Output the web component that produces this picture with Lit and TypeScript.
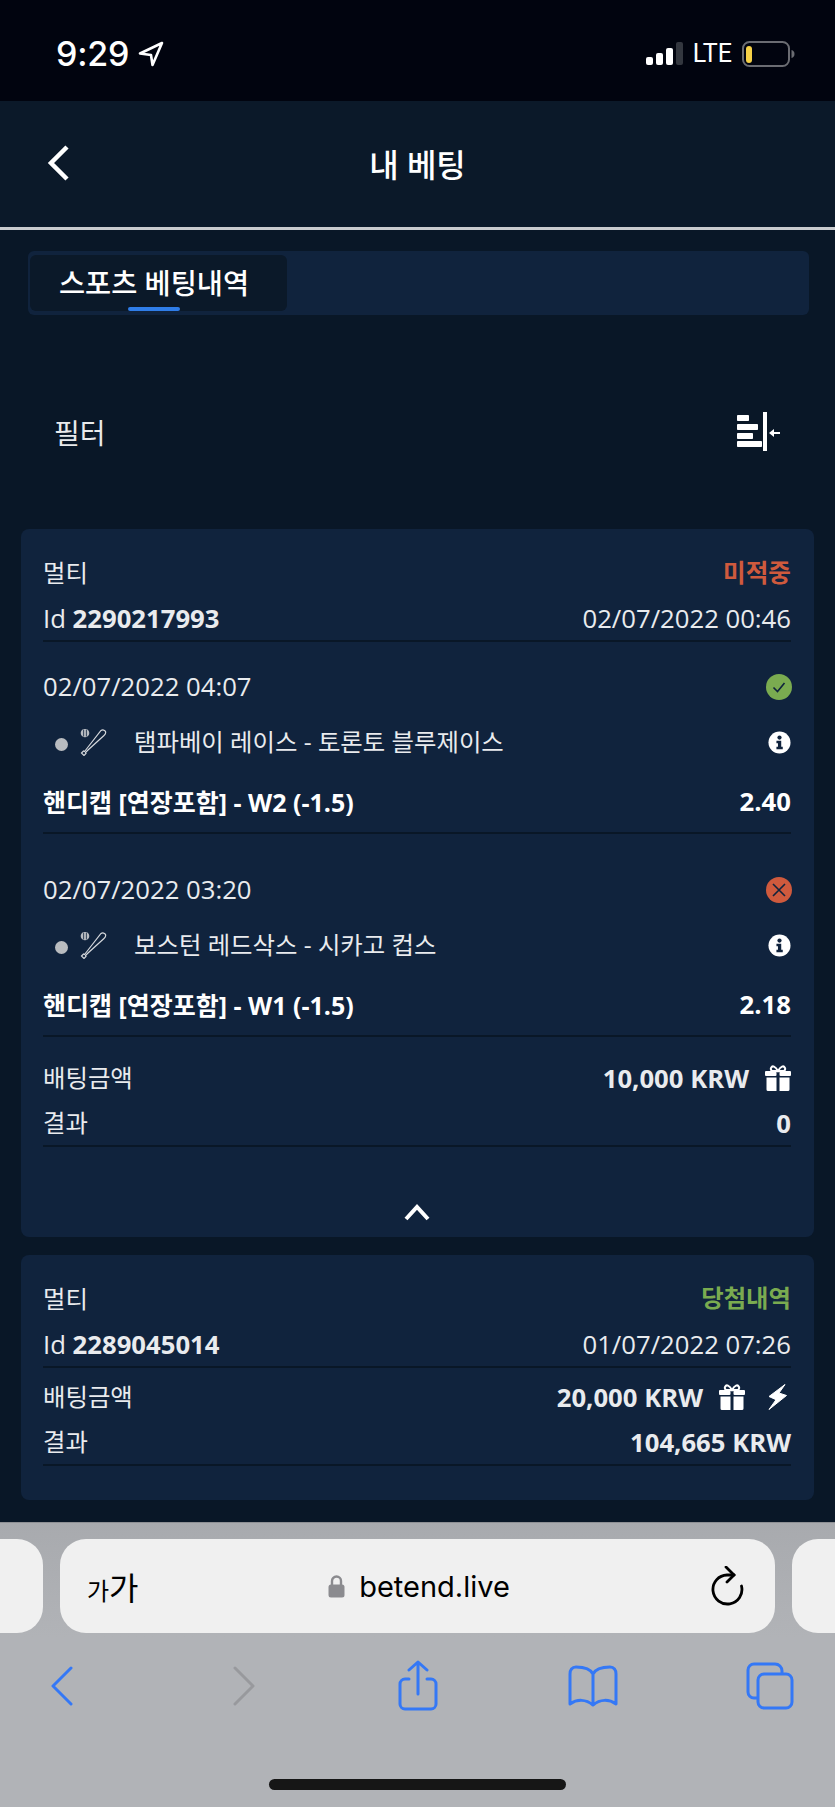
import { LitElement, html, css, svg } from 'lit';
import { customElement } from 'lit/decorators.js';

interface Leg {
  date: string;
  status: 'won' | 'lost';
  match: string;
  market: string;
  odds: string;
}

const LEGS: Leg[] = [
  { date: '02/07/2022 04:07', status: 'won', match: '탬파베이 레이스 - 토론토 블루제이스', market: '핸디캡 [연장포함] - W2 (-1.5)', odds: '2.40' },
  { date: '02/07/2022 03:20', status: 'lost', match: '보스턴 레드삭스 - 시카고 컵스', market: '핸디캡 [연장포함] - W1 (-1.5)', odds: '2.18' },
];

const giftIcon = svg`<svg class="gift" viewBox="0 0 26 26" fill="#fff">
  <path d="M7 6C4.500 4 6.500 .6 9 1.600c1.800.7 3 2.600 4 4.400 1-1.800 2.200-3.700 4-4.400 2.500-1 4.500 2.400 2 4.400z" fill="none" stroke="#fff" stroke-width="2"/>
  <rect x="0" y="6" width="11.500" height="5" rx="1"/><rect x="14.500" y="6" width="11.500" height="5" rx="1"/>
  <path d="M1.500 12.500h10V26h-8.500a1.500 1.500 0 0 1-1.500-1.500zM14.500 12.500h10v12a1.500 1.500 0 0 1-1.500 1.500h-8.500z"/>
</svg>`;

const boltIcon = svg`<svg class="bolt" viewBox="0 0 19 26" fill="#fff" stroke="#fff" stroke-linejoin="round"><path d="M17 .5 1 12.500l7 3.200-7 9.800 17.500-14L11 9l6-8.500z"/></svg>`;

const infoIcon = svg`<svg class="info" viewBox="0 0 24 24"><circle cx="12" cy="12" r="11.500" fill="#fff"/>
  <circle cx="12" cy="6.800" r="2.200" fill="#10233d"/><path d="M8.800 10.200h5v6.300h1.600v2.500H8.800v-2.500h1.600v-3.800H8.800z" fill="#10233d"/></svg>`;

const batIcon = svg`<svg class="bat" viewBox="0 0 27 27" fill="none" stroke="#d5d8dc">
  <circle cx="5" cy="4" r="4.300" fill="#b8bcc2" stroke="none"/><path d="M3.600 .5v7M6.400 .5v7" stroke="#10233d" stroke-width=".8"/>
  <path d="M21 1.500c1.500-1 4-.5 4.500 1 .5 1.500-.3 3-1.500 4L8 21l-2.500 2.500.5 1-2 2-2.500-2.500 2-2 1 .5 2-2.500z" stroke-width="1.200"/>
</svg>`;

@customElement('app-root')
export class AppRoot extends LitElement {
  static styles = css`
    :host {
      display: block;
      width: 835px;
      height: 1807px;
      overflow: hidden;
      background: #091727;
      color: #fff;
      font-family: "Open Sans", "Noto Sans CJK KR", sans-serif;
      font-size: 25.7px;
    }
    .page { display: flex; flex-direction: column; height: 100%; }
    .status {
      flex: none; height: 101px; box-sizing: border-box; padding: 6px 40px 0 56px;
      background: #01040f; display: flex; align-items: center; justify-content: space-between;
    }
    .status-left, .status-right { display: flex; align-items: center; }
    .clock { font-family: Inter, "Liberation Sans", sans-serif; font-size: 34px; font-weight: 500; letter-spacing: -.2px; }
    .loc { width: 26px; height: 26px; margin-left: 9px; }
    .signal { width: 37px; height: 24px; }
    .lte { font-family: Roboto, "Liberation Sans", sans-serif; font-size: 25px; margin: 0 10px; line-height: 1; }
    .battery { width: 53px; height: 26px; }
    .topbar {
      flex: none; height: 126px; box-sizing: border-box; background: #0b1929; padding-bottom: 2px;
      display: flex; align-items: center; justify-content: center; position: relative;
    }
    .topbar h1 { margin: 0; font-size: 32px; font-weight: 500; }
    .topbar .back { position: absolute; left: 46px; top: 44px; width: 26px; height: 36px; }
    .rule { flex: none; height: 3px; background: #c9cbce; }
    .tabs {
      flex: none; height: 64px; margin: 21px 26px 0 28px; padding: 4px 2px; box-sizing: border-box;
      background: #10233d; border-radius: 6px; display: flex;
    }
    .tab {
      width: 257px; background: #0b1929; border-radius: 6px; box-sizing: border-box; display: flex;
      flex-direction: column; align-items: center; font-size: 28.4px; font-weight: 500; padding-right: 9px;
    }
    .tab span { flex: 1; display: flex; align-items: center; }
    .tab i { display: block; width: 52px; height: 4px; background: #2f7de8; border-radius: 2px; }
    .filter {
      flex: none; height: 70px; margin: 82px 0 62px; padding: 0 55px 0 54px; display: flex;
      align-items: center; justify-content: space-between; font-size: 28px; color: #e8eaec;
    }
    .filter svg { width: 43px; height: 40px; }
    .card {
      flex: none; margin: 0 21px 18px; padding: 21px 23px 0 22px; background: #10233d; border-radius: 8px;
      box-sizing: border-box;
    }
    .card.second { padding-bottom: 34px; margin-bottom: 0; }
    .row { height: 46px; display: flex; align-items: center; justify-content: space-between; box-sizing: border-box; }
    .row.ruled { border-bottom: 2px solid #091727; }
    b { font-weight: 700; }
    .light { color: #e9ebee; }
    /* the Korean face sits lower than Open Sans in the same box */
    .ko { font-size: 24.4px; margin-bottom: 4px; }
    .date { margin-bottom: 2px; }
    .lost { color: #cf5a3d; font-weight: 600; font-size: 24.6px; margin-bottom: 4px; }
    .won { color: #7aab50; font-weight: 600; font-size: 24.4px; margin-bottom: 5px; }
    .legs { padding-top: 22px; }
    .leg + .leg { margin-top: 33px; }
    .match { height: 64px; display: flex; align-items: center; }
    .dot { width: 13px; height: 13px; border-radius: 50%; background: #b9bcc0; margin: 5px 12px 0 12px; flex: none; }
    .bat { width: 27px; height: 27px; flex: none; }
    .match-name { margin: 0 0 4px 27px; flex: 1; color: #e9ebee; font-size: 24.4px; }
    .market {
      height: 60px; display: flex; align-items: center; justify-content: space-between; box-sizing: border-box;
      border-bottom: 2px solid #091727; font-weight: 700; font-size: 25px; padding-bottom: 4px;
    }
    .market .odds { font-size: 25.7px; }
    .state { width: 26px; height: 26px; display: block; margin-right: -1px; }
    .info { width: 23px; height: 23px; display: block; }
    .totals { margin-top: 18px; }
    .amount { display: flex; align-items: center; font-weight: 700; }
    .gift { width: 26px; height: 26px; margin-left: 16px; }
    .bolt { width: 19px; height: 26px; margin: 0 4px 0 23px; }
    .collapse { height: 90px; box-sizing: border-box; padding-top: 53px; display: flex; justify-content: center; }
    .collapse svg { width: 28px; height: 24px; }
    .second .totals { margin-top: 6px; }
    .spacer { flex: 1; background: #091727; }
    .safari {
      flex: none; height: 285px; background: linear-gradient(#a8aaae, #b1b3b7 40%); border-top: 1px solid #8e9094;
      box-sizing: border-box; color: #000; overflow: hidden;
    }
    .pills { display: flex; gap: 17px; height: 94px; margin: 16px 0 0 -60px; width: 1000px; }
    .stub { width: 103px; background: #f0f0f0; border-radius: 26px; flex: none; }
    .url {
      width: 715px; flex: none; background: #f0f0f0; border-radius: 26px; display: grid;
      grid-template-columns: 1fr auto 1fr; align-items: center; padding: 0 24px 0 27px; box-sizing: border-box;
    }
    .aa { font-family: "Noto Sans CJK KR", sans-serif; font-size: 32px; line-height: 1; }
    .aa small { font-size: 24px; }
    .site { display: flex; align-items: center; font-family: Inter, "Liberation Sans", sans-serif; font-size: 29px; }
    .lock { width: 17px; height: 23px; margin-right: 14px; }
    .reload { width: 34px; height: 40px; justify-self: end; margin-right: 6px; }
    .tools { display: flex; align-items: center; padding: 26px 0 0 51px; height: 54px; }
    .tools svg { display: block; flex: none; fill: none; stroke: #3478f6; stroke-width: 3; stroke-linecap: round; stroke-linejoin: round; }
    .tools .forward { stroke: #98999d; margin-left: 160px; }
    .tools .share { margin-left: 143px; }
    .tools .book { margin-left: 130px; }
    .tools .pages { margin-left: 128px; }
    .home { width: 297px; height: 11px; background: #161616; border-radius: 6px; margin: 66px 0 0 269px; }
  `;

  private renderLeg(leg: Leg) {
    return html`
      <div class="leg">
        <div class="row light">
          <span class="date">${leg.date}</span>
          ${leg.status === 'won'
            ? html`<svg class="state" viewBox="0 0 26 26"><circle cx="13" cy="13" r="13" fill="#7aab50"/><path d="M7.500 13.500l4 4 7-8.500" fill="none" stroke="#10233d" stroke-width="1.600"/></svg>`
            : html`<svg class="state" viewBox="0 0 26 26"><circle cx="13" cy="13" r="13" fill="#cf5a3d"/><path d="M7 7l12 12M19 7 7 19" fill="none" stroke="#10233d" stroke-width="1.600"/></svg>`}
        </div>
        <div class="match">
          <span class="dot"></span>${batIcon}
          <span class="match-name">${leg.match}</span>${infoIcon}
        </div>
        <div class="market"><span>${leg.market}</span><span class="odds">${leg.odds}</span></div>
      </div>
    `;
  }

  render() {
    return html`
      <div class="page">
        <div class="status">
          <div class="status-left">
            <span class="clock">9:29</span>
            <svg class="loc" viewBox="0 0 26 26" fill="none" stroke="#fff" stroke-width="2.600" stroke-linejoin="round"><path d="M24 2 2 12.500l11 1.500 1.500 10z"/></svg>
          </div>
          <div class="status-right">
            <svg class="signal" viewBox="0 0 37 24">
              <rect x="0" y="15" width="7" height="8" rx="2" fill="#fff"/><rect x="10" y="11" width="7" height="12" rx="2" fill="#fff"/>
              <rect x="20" y="6" width="7" height="17" rx="2" fill="#fff"/><rect x="30" y="0" width="7" height="23" rx="2" fill="#33373f"/>
            </svg>
            <span class="lte">LTE</span>
            <svg class="battery" viewBox="0 0 53 26">
              <rect x="1" y="1" width="46" height="24" rx="6.500" fill="none" stroke="#6a6c72" stroke-width="2"/>
              <rect x="4" y="5" width="6" height="17" rx="3" fill="#f6d147"/>
              <path d="M49.500 9c2 .5 3 2 3 4s-1 3.500-3 4z" fill="#6a6c72"/>
            </svg>
          </div>
        </div>
        <div class="topbar">
          <svg class="back" viewBox="0 0 26 36" fill="none" stroke="#fff" stroke-width="4.500"><path d="M21 2 5 18l16 16" stroke-linejoin="miter"/></svg>
          <h1>내 베팅</h1>
        </div>
        <div class="rule"></div>
        <div class="tabs">
          <div class="tab"><span>스포츠 베팅내역</span><i></i></div>
        </div>
        <div class="filter">
          <span>필터</span>
          <svg viewBox="0 0 43 40" fill="#fff">
            <rect x="0" y="3" width="12" height="6" rx=".8"/><rect x="0" y="12" width="21" height="6" rx=".8"/>
            <rect x="0" y="21" width="16" height="6" rx=".8"/><rect x="0" y="29" width="25" height="6" rx=".8"/>
            <rect x="26" y="0" width="4" height="39"/>
            <path d="M32 21l5-4v3h6v2h-6v3z"/>
          </svg>
        </div>
        <section class="card">
          <div class="row light"><span class="ko">멀티</span><span class="lost">미적중</span></div>
          <div class="row ruled light"><span>Id <b>2290217993</b></span><span>02/07/2022 00:46</span></div>
          <div class="legs">${LEGS.map((leg) => this.renderLeg(leg))}</div>
          <div class="totals">
            <div class="row light"><span class="ko">배팅금액</span><span class="amount">10,000 KRW ${giftIcon}</span></div>
            <div class="row ruled light"><span class="ko">결과</span><span class="amount">0</span></div>
          </div>
          <div class="collapse">
            <svg viewBox="0 0 28 24" fill="none" stroke="#fff" stroke-width="4"><path d="M3 19 14 7l11 12"/></svg>
          </div>
        </section>
        <section class="card second">
          <div class="row light"><span class="ko">멀티</span><span class="won">당첨내역</span></div>
          <div class="row ruled light"><span>Id <b>2289045014</b></span><span>01/07/2022 07:26</span></div>
          <div class="totals">
            <div class="row light"><span class="ko">배팅금액</span><span class="amount">20,000 KRW ${giftIcon}${boltIcon}</span></div>
            <div class="row ruled light"><span class="ko">결과</span><span class="amount">104,665 KRW</span></div>
          </div>
        </section>
        <div class="spacer"></div>
        <div class="safari">
          <div class="pills">
            <div class="stub"></div>
            <div class="url">
              <span class="aa"><small>가</small>가</span>
              <span class="site">
                <svg class="lock" viewBox="0 0 17 23"><path d="M4 10V6a4.500 4.500 0 0 1 9 0v4" fill="none" stroke="#8b8b8f" stroke-width="2.400"/><rect x="0.500" y="9.500" width="16" height="13" rx="2.500" fill="#8b8b8f"/></svg>
                betend.live
              </span>
              <svg class="reload" viewBox="0 0 34 40" fill="none" stroke="#000" stroke-width="2.800" stroke-linecap="round"><path d="M30.500 20A14.500 14.500 0 1 1 16 9h7"/><path d="M15 1l8 8-7 7"/></svg>
            </div>
            <div class="stub"></div>
          </div>
          <div class="tools">
            <svg width="22" height="40" viewBox="0 0 22 40"><path d="M20 2 2 20l18 18"/></svg>
            <svg class="forward" width="22" height="40" viewBox="0 0 22 40"><path d="M2 2l18 18L2 38"/></svg>
            <svg class="share" width="40" height="52" viewBox="0 0 40 52"><path d="M11 19H7a5 5 0 0 0-5 5v20a5 5 0 0 0 5 5h26a5 5 0 0 0 5-5V24a5 5 0 0 0-5-5h-4M20 34V2M11 10l9-8 9 8"/></svg>
            <svg class="book" width="50" height="42" viewBox="0 0 50 42"><path d="M25 9C22 3 15 2 8 2 4 2 2 5 2 9v30c7-5 16-5 23 1 7-6 16-6 23-1V9c0-4-2-7-6-7-7 0-14 1-17 7zM25 9v31"/></svg>
            <svg class="pages" width="48" height="48" viewBox="0 0 48 48"><path d="M11 36H8a6 6 0 0 1-6-6V8a6 6 0 0 1 6-6h21a7 7 0 0 1 7 7v2"/><rect x="12" y="12" width="34" height="34" rx="6"/></svg>
          </div>
          <div class="home"></div>
        </div>
      </div>
    `;
  }
}
